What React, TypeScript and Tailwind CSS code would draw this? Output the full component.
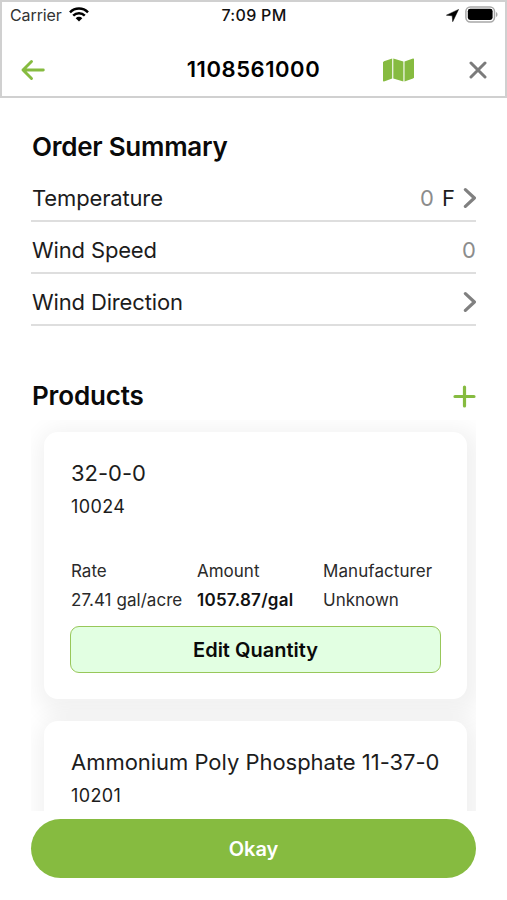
import type { ReactNode } from 'react';

interface Product {
  id: string;
  name: string;
  details?: { rate: string; amount: string; manufacturer: string };
}

const products: Product[] = [
  { id: '10024', name: '32-0-0', details: { rate: '27.41 gal/acre', amount: '1057.87/gal', manufacturer: 'Unknown' } },
  { id: '10201', name: 'Ammonium Poly Phosphate 11-37-0' },
];

const StatusBar = () => (
  <div className="grid h-[26px] grid-cols-[1fr_auto_1fr] items-center pl-2 pr-[7px] text-[16px] leading-none">
    <div className="flex items-center gap-[7px]">
      <span className="tracking-[-0.1px] text-[#333]">Carrier</span>
      <svg className="-mt-[2px]" width="20" height="15" viewBox="0 0 20 15" fill="none" stroke="#000" strokeWidth="2.5">
        <path d="M1 5.3a12.8 12.8 0 0 1 18 0" />
        <path d="M4.2 8.6a8.2 8.2 0 0 1 11.6 0" />
        <path d="M10 14.4 6.7 11.2a4.7 4.7 0 0 1 6.6 0z" fill="#000" stroke="none" />
      </svg>
    </div>
    <span className="font-medium tracking-[0.3px] text-[#111]">7:09 PM</span>
    <div className="-mt-[2px] flex items-center justify-end gap-[6px]">
      <svg className="mt-[2px]" width="13" height="13" viewBox="0 0 13 13">
        <path d="M12.6.4.4 6.2l5.8.6.5 5.9z" fill="#000" stroke="#000" strokeWidth="0.5" />
      </svg>
      <svg width="33" height="17" viewBox="0 0 33 17">
        <rect x="0.9" y="0.9" width="28.6" height="15" rx="4.4" fill="#fff" stroke="#a8a8a8" strokeWidth="1.5" />
        <rect x="2.8" y="2.8" width="24.8" height="11.2" rx="2.4" fill="#000" />
        <path d="M31 6v5c2-.8 2-4.2 0-5z" fill="#a8a8a8" />
      </svg>
    </div>
  </div>
);

const Header = () => (
  <header className="h-[98px] shrink-0 border-2 border-[#d0d0d0]">
    <StatusBar />
    <div className="grid h-[83px] grid-cols-[1fr_auto_1fr] items-center pl-[18px] pr-[18px]">
      <button aria-label="Back" className="w-7">
        <svg width="26" height="24" viewBox="0 0 26 24" fill="none" stroke="#86bb40" strokeWidth="2.9" strokeLinecap="round" strokeLinejoin="round">
          <path d="M23.3 12H3M11.5 3.5 3 12l8.5 8.5" />
        </svg>
      </button>
      <h1 className="pb-[2px] text-[22px] font-semibold leading-none tracking-[0.55px] text-black">1108561000</h1>
      <div className="flex items-center justify-end gap-[55px]">
        <button aria-label="Map">
          <svg width="31" height="24" viewBox="0 0 31 24" fill="#86bb40">
            <path d="M0 4.2 1 3.2 9.2.6v19.8L1 23.4a.8.8 0 0 1-1-.8z" />
            <path d="M10.3.6 20.4 3.6v20L10.3 20.4z" />
            <path d="M21.5 3.6 30 .6a.8.8 0 0 1 1 .8v18.4l-1 .8-8.5 3z" />
          </svg>
        </button>
        <button aria-label="Close">
          <svg width="18" height="18" viewBox="0 0 18 18" fill="none" stroke="#7b7b7b" strokeWidth="3" strokeLinecap="round">
            <path d="m2 2 14 14M16 2 2 16" />
          </svg>
        </button>
      </div>
    </div>
  </header>
);

const Chevron = () => (
  <svg width="13" height="22" viewBox="0 0 13 22" fill="none" stroke="#808080" strokeWidth="3.2" strokeLinecap="round" strokeLinejoin="round">
    <path d="m2.4 2.6 9 8.4-9 8.4" />
  </svg>
);

const SummaryRow = ({ label, children }: { label: string; children: ReactNode }) => (
  <div className="flex h-[52px] items-center justify-between border-b-2 border-[#dedede] pt-[6px] text-[22px] text-[#1c1c1c]">
    <span className="pl-[1px] tracking-[-0.15px]">{label}</span>
    <div className="flex items-center">{children}</div>
  </div>
);

const ProductCard = ({ product: { id, name, details } }: { product: Product }) => (
  <div className="h-[267px] shrink-0 rounded-[14px] bg-white px-[27px] pt-[26px] shadow-[4px_6px_22px_10px_rgba(0,0,0,0.055)]">
    <h3 className="whitespace-nowrap text-[22px] leading-[30px] tracking-[-0.03px] text-[#1c1c1c]">{name}</h3>
    <p className="mt-[7px] text-[18px] leading-[24px] tracking-[0.4px] text-[#1c1c1c]">{id}</p>
    {details && (
      <>
        <div className="mt-[40px] flex whitespace-nowrap text-[17px] leading-[24px] text-[#2a2a2a]">
          <div className="w-[126px]">
            <p>Rate</p>
            <p className="mt-[5px] tracking-[0.05px]">{details.rate}</p>
          </div>
          <div className="w-[126px]">
            <p>Amount</p>
            <p className="mt-[5px] font-semibold tracking-[0.25px] text-[#111]">{details.amount}</p>
          </div>
          <div>
            <p className="tracking-[0.08px]">Manufacturer</p>
            <p className="mt-[5px]">{details.manufacturer}</p>
          </div>
        </div>
        <button className="-ml-[1px] mt-[14px] block h-[47px] w-[371px] rounded-[9px] border-[1.5px] border-[#98c75a] bg-[#e2ffe2] text-[20px] font-semibold text-[#0a0a0a]">
          Edit Quantity
        </button>
      </>
    )}
  </div>
);

export default function App() {
  return (
    <div className="flex h-[900px] w-[507px] flex-col overflow-hidden bg-white font-['Inter',sans-serif]">
      <Header />

      <main className="flex min-h-0 flex-1 flex-col pl-[31px] pr-[31px]">
        {/* Order summary */}
        <h2 className="mt-[33px] pl-[1px] text-[26px] font-semibold leading-[32px] tracking-[-0.25px] text-[#0a0a0a]">Order Summary</h2>
        <section className="mt-[7px]">
          <SummaryRow label="Temperature">
            <span className="mr-[8px] text-[#8c8c8c]">0</span>
            <span className="mr-[8px]">F</span>
            <Chevron />
          </SummaryRow>
          <SummaryRow label="Wind Speed">
            <span className="text-[#8c8c8c]">0</span>
          </SummaryRow>
          <SummaryRow label="Wind Direction">
            <Chevron />
          </SummaryRow>
        </section>

        {/* Products */}
        <div className="mt-[53px] flex h-[34px] items-center justify-between">
          <h2 className="pl-[1px] text-[26px] font-semibold leading-[32px] tracking-[-0.15px] text-[#0a0a0a]">Products</h2>
          <button aria-label="Add product">
            <svg width="23" height="23" viewBox="0 0 23 23" fill="none" stroke="#86bb40" strokeWidth="3.2" strokeLinecap="round">
              <path d="M11.5 2v19M2 11.5h19" />
            </svg>
          </button>
        </div>
        <div className="mt-[7px] flex h-[391px] shrink-0 flex-col gap-[22px] overflow-hidden pl-[13px] pr-[9px] pt-[12px]">
          {products.map((p) => (
            <ProductCard key={p.id} product={p} />
          ))}
        </div>

        <button className="mt-[8px] h-[59px] shrink-0 rounded-full bg-[#86bb40] text-[20px] font-semibold text-white">Okay</button>
      </main>
    </div>
  );
}
